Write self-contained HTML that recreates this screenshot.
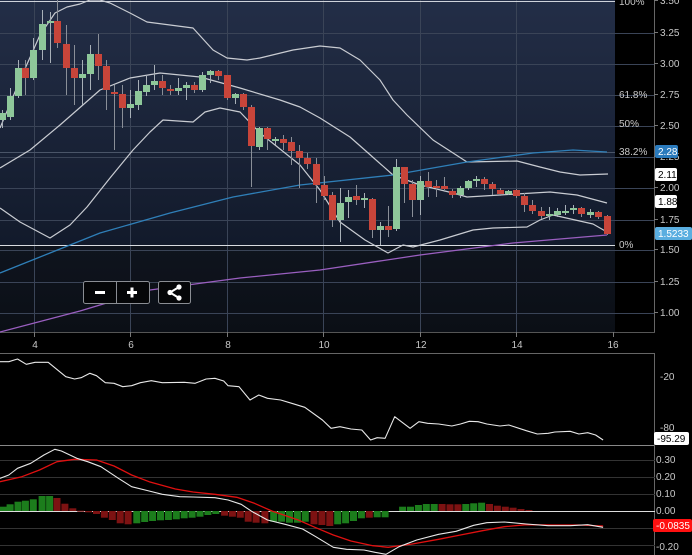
<!DOCTYPE html>
<html><head><meta charset="utf-8">
<style>
html,body{margin:0;padding:0;background:#000;width:692px;height:555px;overflow:hidden}
svg{display:block;font-family:"Liberation Sans",sans-serif}
</style></head><body>
<svg id="s" width="692" height="555" viewBox="0 0 692 555" xmlns="http://www.w3.org/2000/svg">
<defs>
<linearGradient id="g1" x1="0" y1="0" x2="0" y2="1">
<stop offset="0" stop-color="#232e47"/><stop offset="1" stop-color="#121a2b"/>
</linearGradient>
<linearGradient id="g2" x1="0" y1="0" x2="0" y2="1">
<stop offset="0" stop-color="#0f141e"/><stop offset="1" stop-color="#0b0f16"/>
</linearGradient>
</defs>
<rect x="0" y="0" width="692" height="555" fill="#000"/>
<rect x="0" y="0" width="615" height="245" fill="url(#g1)"/>
<rect x="0" y="245" width="615" height="87" fill="url(#g2)"/>
<g id="grid" stroke="#3a4457" stroke-width="1"></g>
<g id="main"></g>
<g id="low"></g>
<g id="txt" fill="#c8c8c8" font-size="10"></g>
</svg>
<script>
var NS="http://www.w3.org/2000/svg";
function el(p,t,a,txt){var e=document.createElementNS(NS,t);for(var k in a)e.setAttribute(k,a[k]);if(txt!==undefined)e.textContent=txt;document.getElementById(p).appendChild(e);return e;}
[33,64,95,126,157,188,220,250,282,313].forEach(function(y){el('grid','line',{x1:0,x2:655,y1:y+.5,y2:y+.5});});
[34,130,227,323,420,516].forEach(function(x){el('grid','line',{x1:x+.5,x2:x+.5,y1:0,y2:332});});
el('grid','line',{x1:0,x2:615,y1:1.5,y2:1.5,stroke:'#cfd3da'});
el('grid','line',{x1:0,x2:615,y1:245.5,y2:245.5,stroke:'#d8dbe0'});
el('grid','line',{x1:0,x2:615,y1:152.5,y2:152.5,stroke:'#4a5568'});
el('grid','line',{x1:654.5,x2:654.5,y1:0,y2:332,stroke:'#666'});
el('grid','line',{x1:0,x2:655,y1:332.5,y2:332.5,stroke:'#555'});
el('grid','line',{x1:0,x2:655,y1:353.5,y2:353.5,stroke:'#666'});
el('grid','line',{x1:0,x2:655,y1:445.5,y2:445.5,stroke:'#888'});
el('grid','line',{x1:654.5,x2:654.5,y1:353,y2:555,stroke:'#666'});
[460,477,494,528,545].forEach(function(y){el('grid','line',{x1:0,x2:655,y1:y+.5,y2:y+.5,stroke:'#333'});});
el('grid','line',{x1:0,x2:655,y1:511.5,y2:511.5,stroke:'#ddd'});
[[34,333],[130,333],[227,333],[323,333],[420,333],[516,333],[613,333]].forEach(function(p){el('grid','line',{x1:p[0]+.5,x2:p[0]+.5,y1:332,y2:337,stroke:'#777'});});
function pl(p,pts,col,w){el(p,'polyline',{points:pts.map(function(q){return q[0]+','+q[1]}).join(' '),fill:'none',stroke:col,'stroke-width':w||1.2,'stroke-linejoin':'round'});}
pl('main',[[0,128],[20,80],[40,35],[55,13],[67,7],[80,4],[90,0],[100,0],[110,3],[130,13],[147,22],[193,28],[213,50],[227,58],[247,60],[260,58],[293,50],[320,46],[340,48],[360,60],[380,80],[393,100],[407,115],[433,140],[467,162],[517,161],[540,167],[560,172],[580,175],[608,174]],'#c9ccd2');
pl('main',[[0,168],[30,150],[60,125],[100,90],[130,78],[160,73],[200,77],[240,88],[280,100],[300,107],[320,118],[350,137],[367,152],[393,175],[420,185],[453,193],[467,197],[500,195],[550,192],[577,195],[607,203]],'#c9ccd2');
pl('main',[[0,208],[20,222],[50,238],[70,225],[87,207],[110,178],[133,150],[150,132],[163,120],[193,122],[205,112],[220,108],[240,112],[260,133],[300,165],[320,190],[340,222],[365,240],[388,253],[403,245],[413,247],[440,240],[473,230],[493,228],[527,227],[540,220],[553,215],[593,224],[607,232]],'#c9ccd2');
pl('main',[[0,273],[50,253],[100,233],[170,213],[233,197],[300,185],[393,175],[467,162],[533,153],[573,150],[607,152]],'#2f7fb8',1.3);
pl('main',[[0,332],[80,311],[150,290],[240,278],[320,270],[420,255],[513,243],[607,235]],'#9a5fc0',1.3);
var C=[[2,120,113,110,128],[10,117,96,88,120],[18,96,68,60,98],[25,68,78,60,95],[33,78,50,38,80],[42,50,24,10,60],[50,23,21,12,63],[57,21,43,0,48],[66,44,68,25,95],[74,68,78,45,105],[82,78,74,60,105],[90,74,54,45,90],[98,54,66,34,80],[106,66,90,60,110],[114,92,94,85,150],[122,94,108,85,128],[130,108,104,90,118],[138,105,91,80,110],[146,92,85,75,96],[154,85,81,65,90],[162,81,88,75,95],[170,89,91,85,95],[178,91,88,78,95],[186,88,85,82,100],[194,85,90,82,93],[202,90,75,72,92],[210,75,71,70,83],[218,71,76,70,80],[227,75,98,75,100],[235,98,94,93,104],[243,94,107,93,110],[251,107,146,105,187],[259,147,128,127,150],[267,128,139,127,150],[275,140,139,137,145],[283,139,143,135,150],[291,142,151,137,165],[299,151,158,145,188],[307,158,164,153,169],[316,164,185,158,203],[324,185,196,176,200],[332,195,220,192,227],[340,220,203,188,242],[348,202,197,190,218],[356,196,200,185,205],[364,200,198,193,208],[372,199,230,198,238],[380,230,226,222,245],[388,226,230,206,237],[396,229,167,159,231],[404,167,184,167,203],[412,184,200,180,217],[420,200,181,176,215],[428,181,187,172,197],[436,186,188,180,197],[444,186,189,177,192],[452,191,195,189,198],[460,195,188,186,198],[468,188,181,180,190],[476,181,179,176,187],[484,179,184,177,190],[492,184,189,182,195],[500,190,194,188,196],[508,194,191,190,195],[516,190,196,189,198],[524,196,205,193,212],[532,205,211,200,214],[541,211,216,207,219],[549,216,214,207,220],[557,215,211,208,217],[565,212,211,205,215],[573,210,208,205,214],[581,208,214,207,217],[590,215,212,209,218],[598,212,217,211,219],[607,216,234,215,235]];
C.forEach(function(c){var up=c[2]<c[1];var col=up?'#8ec79a':'#c8453a';
el('main','line',{x1:c[0]+.5,x2:c[0]+.5,y1:c[3],y2:c[4],stroke:up?'#a8b0b8':'#8a8f98','stroke-width':1});
var t=Math.min(c[1],c[2]),b=Math.max(c[1],c[2]);if(b-t<2)b=t+2;
el('main','rect',{x:c[0]-3,y:t,width:7,height:b-t,fill:col});});
el('main','rect',{x:83.5,y:281.5,width:66,height:22,rx:2,fill:'#050608',stroke:'#8a8d93'});
el('main','line',{x1:116.5,x2:116.5,y1:282,y2:303,stroke:'#8a8d93'});
el('main','rect',{x:95,y:291,width:10,height:3,fill:'#fff'});
el('main','rect',{x:127,y:291,width:10,height:3,fill:'#fff'});
el('main','rect',{x:130.5,y:287.5,width:3,height:10,fill:'#fff'});
el('main','rect',{x:158.5,y:281.5,width:32,height:22,rx:2,fill:'#050608',stroke:'#8a8d93'});
el('main','polyline',{points:'179,287 170,292.5 179,298',fill:'none',stroke:'#fff','stroke-width':2});
el('main','circle',{cx:179,cy:287,r:2.6,fill:'#fff'});el('main','circle',{cx:170,cy:292.5,r:2.6,fill:'#fff'});el('main','circle',{cx:179,cy:298,r:2.6,fill:'#fff'});
var W=[[0,65],[20,65],[40,57],[60,73],[80,67],[110,67],[150,110],[170,117],[185,113],[205,100],[220,107],[240,128],[260,130],[280,140],[300,137],[320,128],[345,122],[370,128],[420,127],[445,130],[470,117],[490,115],[510,123],[520,137],[545,140],[570,180],[590,165],[610,175],[640,180],[665,190],[695,202],[735,240],[755,265],[775,260],[800,267],[825,270],[845,300],[860,293],[878,295],[900,230],[935,265],[955,245],[975,250],[1000,252],[1030,258],[1050,252],[1070,244],[1090,245],[1110,252],[1140,258],[1160,255],[1200,272],[1225,282],[1250,280],[1265,276],[1300,274],[1320,282],[1340,278],[1358,285],[1375,300]];
function cv(a){return a.map(function(q){return [(q[0]/2.28).toFixed(1),(340+q[1]/3).toFixed(1)]});}
var H=[[0,500,'g'],[15,493,'g'],[33,485,'g'],[50,482,'g'],[68,478,'g'],[88,468,'g'],[105,468,'g'],[122,474,'r'],[140,491,'r'],[158,505,'r'],[176,512,'r'],[194,517,'r'],[212,522,'r'],[230,533,'r'],[248,540,'r'],[266,550,'r'],[284,553,'r'],[304,550,'g'],[322,546,'g'],[340,543,'g'],[358,541,'g'],[376,540,'g'],[394,538,'g'],[412,535,'g'],[430,533,'g'],[448,530,'g'],[466,525,'g'],[484,522,'g'],[504,527,'r'],[522,530,'r'],[540,533,'r'],[558,545,'r'],[576,548,'r'],[596,550,'r'],[616,545,'g'],[634,545,'g'],[652,548,'g'],[670,548,'g'],[688,545,'g'],[708,553,'r'],[726,555,'r'],[744,558,'r'],[762,553,'g'],[780,550,'g'],[798,543,'g'],[816,535,'g'],[834,533,'r'],[852,532,'g'],[870,532,'g'],[910,500,'g'],[928,500,'g'],[946,495,'g'],[964,492,'g'],[982,492,'g'],[1000,492,'r'],[1018,493,'r'],[1036,493,'r'],[1054,492,'g'],[1072,490,'g'],[1090,488,'g'],[1108,492,'r'],[1126,497,'r'],[1144,500,'r'],[1162,503,'r'],[1180,507,'r'],[1198,510,'r']];
H.forEach(function(h){var x=h[0]/2.28,y=340+h[1]/3,z=511;var t=Math.min(y,z),b=Math.max(y,z);
el('low','rect',{x:x.toFixed(1),y:t.toFixed(1),width:7,height:Math.max(1,b-t).toFixed(1),fill:h[2]=='g'?'#1c7d1c':'#7d1212'});});
pl('low',cv(W),'#e8e8e8',1.1);
pl('low',cv([[0,425],[50,410],[90,390],[130,365],[170,358],[220,360],[260,378],[300,405],[340,425],[400,447],[440,456],[490,463],[540,472],[580,490],[620,513],[680,540],[720,563],[760,585],[800,603],[850,617],[885,622],[940,612],[1000,598],[1050,585],[1100,572],[1150,560],[1200,554],[1260,555],[1320,555],[1375,558]]),'#e01010',1.3);
pl('low',cv([[0,415],[20,405],[40,385],[70,370],[100,345],[125,328],[140,333],[175,355],[200,365],[230,380],[270,415],[300,440],[340,453],[370,463],[410,470],[440,471],[490,473],[520,480],[550,493],[575,515],[610,540],[650,553],[690,567],[720,590],[760,622],[790,628],[830,630],[855,637],[880,643],[910,620],[950,600],[1000,583],[1040,574],[1080,556],[1110,548],[1150,546],[1200,552],[1250,557],[1300,557],[1340,554],[1375,562]]),'#e8e8e8',1.1);
function tx(x,y,s,o){var a={x:x,y:y};for(var k in o)a[k]=o[k];return el('txt','text',a,s);}
[['3.50',4],['3.25',36],['3.00',67],['2.75',98],['2.50',129],['2.25',160],['2.00',191],['1.75',223],['1.50',253],['1.25',285],['1.00',316]].forEach(function(p){tx(660,p[1],p[0]);el('grid','line',{x1:654,x2:658,y1:p[1]-3.5,y2:p[1]-3.5,stroke:'#777'});});
[['100%',5],['61.8%',98],['50%',127],['38.2%',155],['0%',248]].forEach(function(p){tx(619,p[1],p[0]);});
[['4',35],['6',131],['8',228],['10',324],['12',421],['14',517],['16',613]].forEach(function(p){tx(p[1],348,p[0],{'text-anchor':'middle'});});
function box(x,y,w,s,bg,fg){el('txt','rect',{x:x,y:y,width:w,height:13,rx:2,fill:bg});tx(x+3,y+10,s,{fill:fg});}
box(655,145,23,'2.28','#2b7bbd','#fff');
box(655,168,22,'2.11','#fff','#000');
box(655,195,22,'1.88','#fff','#000');
box(655,227,37,'1.5233','#5aaee0','#fff');
tx(660,380,'-20');tx(660,431,'-80');
box(654,432,35,'-95.29','#fff','#000');
[['0.30',463],['0.20',480],['0.10',497],['0.00',514],['-0.20',550]].forEach(function(p){tx(656,p[1],p[0]);});
box(653,519,39,'-0.0835','#ff1010','#fff');
</script>
</body></html>
